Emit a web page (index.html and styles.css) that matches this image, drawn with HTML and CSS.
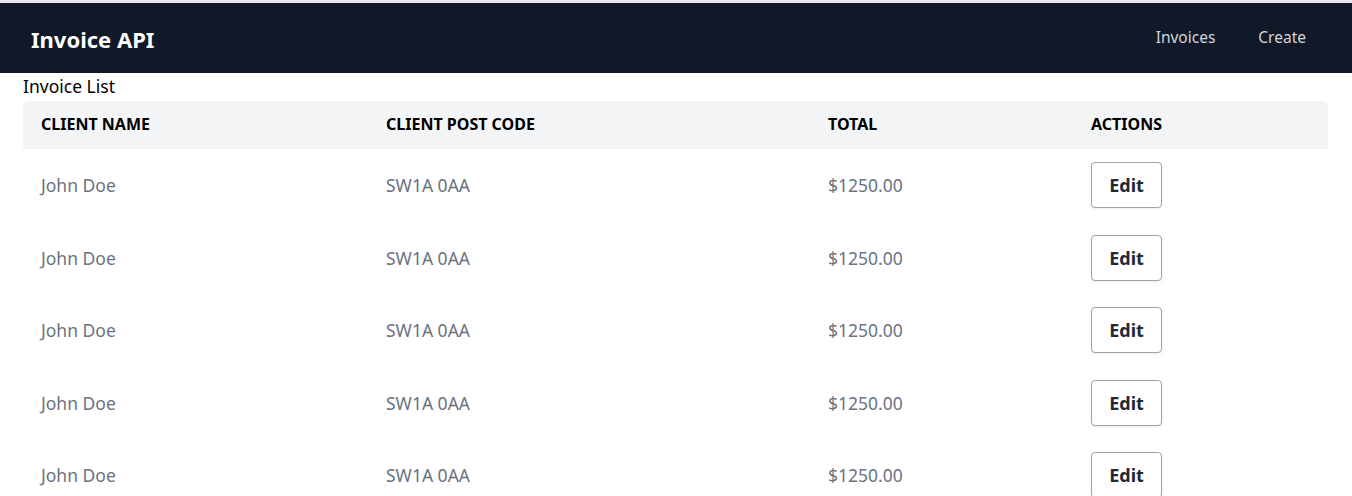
FILE: index.html
```html
<!DOCTYPE html>
<html lang="en">
<head>
<meta charset="utf-8">
<title>Invoice API</title>
<link rel="stylesheet" href="styles.css">
</head>
<body>
<div class="topline"></div>
<nav class="navbar">
  <div class="brand">Invoice API</div>
  <div class="links">
    <a class="link" href="#">Invoices</a>
    <a class="link" href="#">Create</a>
  </div>
</nav>
<main class="content">
  <div class="heading">Invoice List</div>
  <table class="invoices">
    <colgroup>
      <col class="c1"><col class="c2"><col class="c3"><col class="c4">
    </colgroup>
    <thead>
      <tr><th>Client Name</th><th>Client Post Code</th><th>Total</th><th>Actions</th></tr>
    </thead>
    <tbody>
      <tr><td>John Doe</td><td>SW1A 0AA</td><td>$1250.00</td><td><button class="edit">Edit</button></td></tr>
      <tr><td>John Doe</td><td>SW1A 0AA</td><td>$1250.00</td><td><button class="edit">Edit</button></td></tr>
      <tr><td>John Doe</td><td>SW1A 0AA</td><td>$1250.00</td><td><button class="edit">Edit</button></td></tr>
      <tr><td>John Doe</td><td>SW1A 0AA</td><td>$1250.00</td><td><button class="edit">Edit</button></td></tr>
      <tr><td>John Doe</td><td>SW1A 0AA</td><td>$1250.00</td><td><button class="edit">Edit</button></td></tr>
    </tbody>
  </table>
</main>
</body>
</html>
```
FILE: styles.css
```css
* { box-sizing: border-box; }
html, body { margin: 0; padding: 0; background: #ffffff; }
body { font-family: "Noto Sans", "Open Sans", sans-serif; color: #000; }
.topline { height: 3px; background: #e5e7eb; }
.navbar {
  height: 70px;
  background: #111827;
  display: flex;
  align-items: center;
  justify-content: space-between;
  padding: 0 46px 0 31px;
}
.brand { color: #ffffff; font-weight: 700; font-size: 22px; line-height: 30px; margin-top: 2px; }
.links { display: flex; gap: 43px; margin-top: -3px; }
.link { color: #d1d5db; text-decoration: none; font-size: 15.5px; line-height: 24px; }
.content { padding: 0 24px 0 23px; }
.heading { font-size: 17.5px; line-height: 26px; height: 28px; }
.invoices { width: 100%; border-collapse: separate; border-spacing: 0; table-layout: fixed; }
.c1 { width: 345px; } .c2 { width: 442px; } .c3 { width: 263px; }
.invoices thead th {
  background: #f3f4f6;
  height: 48px;
  padding: 0 18px 2px;
  text-align: left;
  text-transform: uppercase;
  font-size: 16px;
  font-weight: 700;
  color: #000;
}
.invoices thead th:first-child { border-top-left-radius: 6px; }
.invoices thead th:last-child { border-top-right-radius: 6px; }
.invoices tbody td {
  height: 72.5px;
  padding: 0 18px;
  font-size: 17.5px;
  color: #6b7280;
  vertical-align: middle;
}
.edit {
  font-family: inherit;
  font-size: 18px;
  font-weight: 700;
  color: #1f2937;
  background: #ffffff;
  border: 1px solid #9ca3af;
  border-radius: 4px;
  height: 46px;
  width: 71px;
  padding: 0;
  box-shadow: 0 1px 2px rgba(0,0,0,0.08);
}
```
